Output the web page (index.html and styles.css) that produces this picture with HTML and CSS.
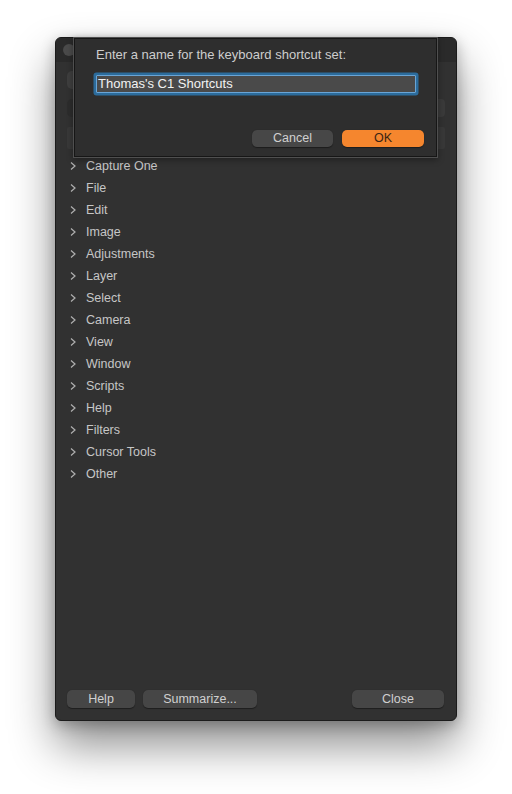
FILE: index.html
```html
<!DOCTYPE html>
<html>
<head>
<meta charset="utf-8">
<link rel="stylesheet" href="styles.css">
</head>
<body>
<div class="stage">
  <div class="window">
    <div class="titlebar">
      <span class="light"></span><span class="light"></span><span class="light"></span>
    </div>
    <div class="toolbar"><span class="popup"></span></div>
    <div class="searchrow"><span class="search"><span class="mag"></span></span><span class="gear"></span></div>
    <div class="header"></div>
    <ul class="tree">
      <li><svg class="chev" viewBox="0 0 8 10"><path d="M2 1.5 L6 5 L2 8.5"/></svg>Capture One</li>
      <li><svg class="chev" viewBox="0 0 8 10"><path d="M2 1.5 L6 5 L2 8.5"/></svg>File</li>
      <li><svg class="chev" viewBox="0 0 8 10"><path d="M2 1.5 L6 5 L2 8.5"/></svg>Edit</li>
      <li><svg class="chev" viewBox="0 0 8 10"><path d="M2 1.5 L6 5 L2 8.5"/></svg>Image</li>
      <li><svg class="chev" viewBox="0 0 8 10"><path d="M2 1.5 L6 5 L2 8.5"/></svg>Adjustments</li>
      <li><svg class="chev" viewBox="0 0 8 10"><path d="M2 1.5 L6 5 L2 8.5"/></svg>Layer</li>
      <li><svg class="chev" viewBox="0 0 8 10"><path d="M2 1.5 L6 5 L2 8.5"/></svg>Select</li>
      <li><svg class="chev" viewBox="0 0 8 10"><path d="M2 1.5 L6 5 L2 8.5"/></svg>Camera</li>
      <li><svg class="chev" viewBox="0 0 8 10"><path d="M2 1.5 L6 5 L2 8.5"/></svg>View</li>
      <li><svg class="chev" viewBox="0 0 8 10"><path d="M2 1.5 L6 5 L2 8.5"/></svg>Window</li>
      <li><svg class="chev" viewBox="0 0 8 10"><path d="M2 1.5 L6 5 L2 8.5"/></svg>Scripts</li>
      <li><svg class="chev" viewBox="0 0 8 10"><path d="M2 1.5 L6 5 L2 8.5"/></svg>Help</li>
      <li><svg class="chev" viewBox="0 0 8 10"><path d="M2 1.5 L6 5 L2 8.5"/></svg>Filters</li>
      <li><svg class="chev" viewBox="0 0 8 10"><path d="M2 1.5 L6 5 L2 8.5"/></svg>Cursor Tools</li>
      <li><svg class="chev" viewBox="0 0 8 10"><path d="M2 1.5 L6 5 L2 8.5"/></svg>Other</li>
    </ul>
    <div class="footer">
      <button class="btn help">Help</button>
      <button class="btn summarize">Summarize...</button>
      <span class="spacer"></span>
      <button class="btn close">Close</button>
    </div>

    <div class="sheet">
      <div class="prompt">Enter a name for the keyboard shortcut set:</div>
      <div class="field">Thomas's C1 Shortcuts</div>
      <div class="actions">
        <button class="btn cancel">Cancel</button>
        <button class="btn ok">OK</button>
      </div>
    </div>
  </div>
</div>
</body>
</html>
```
FILE: styles.css
```css
html, body {
  margin: 0;
  padding: 0;
  background: #ffffff;
  width: 512px;
  height: 794px;
  overflow: hidden;
  font-family: "Liberation Sans", Arial, sans-serif;
}

.stage {
  padding: 37px 0 0 55px;
}

.window {
  position: relative;
  box-sizing: border-box;
  width: 402px;
  height: 684px;
  background: #313131;
  border: 1px solid #1b1b1b;
  border-radius: 6px;
  box-shadow: 0 24px 45px rgba(0, 0, 0, 0.45), 0 4px 14px rgba(0, 0, 0, 0.25);
  display: flex;
  flex-direction: column;
}

.titlebar {
  height: 24px;
  background: #2a2a2a;
  border-radius: 5px 5px 0 0;
  display: flex;
  align-items: center;
  gap: 8px;
  padding-left: 7px;
}

.light {
  width: 12px;
  height: 12px;
  border-radius: 50%;
  background: #4a4a4a;
}

.toolbar {
  margin-top: 9px;
  padding-left: 11px;
  height: 18px;
  display: flex;
}

.popup {
  width: 90px;
  height: 18px;
  border-radius: 5px;
  background: #3e3e3e;
}

.searchrow {
  margin-top: 10px;
  height: 18px;
  padding: 0 11px;
  display: flex;
  gap: 6px;
}

.search {
  flex: 1;
  border-radius: 5px;
  background: #2c2c2c;
  display: flex;
  align-items: center;
  padding-left: 14px;
}

.mag {
  width: 3px;
  height: 5px;
  border-radius: 2px;
  background: #7a7a7a;
}

.gear {
  width: 12px;
  border-radius: 4px;
  background: #3a3a3a;
}

.header {
  margin: 10px 11px 0;
  height: 22px;
  background: #383838;
  border-radius: 2px;
}

.tree {
  list-style: none;
  margin: 6px 0 0;
  padding: 0 0 0 13px;
  flex: 1;
}

.tree li {
  height: 22px;
  display: flex;
  align-items: center;
  font-size: 12.5px;
  color: #c6c6c6;
}

.chev {
  width: 8px;
  height: 10px;
  margin-right: 9px;
  fill: none;
  stroke: #b0b0b0;
  stroke-width: 1.2;
}

.footer {
  display: flex;
  padding: 0 12px 12px 11px;
  gap: 8px;
}

.spacer {
  flex: 1;
}

.btn {
  font-family: "Liberation Sans", Arial, sans-serif;
  font-size: 12.5px;
  color: #d0d0d0;
  background: #464646;
  border: none;
  border-radius: 5px;
  height: 18px;
  padding: 0;
  line-height: 18px;
  box-shadow: 0 0.5px 1px rgba(0, 0, 0, 0.4);
}

.help { width: 68px; }
.summarize { width: 114px; }
.close { width: 92px; }

.sheet {
  position: absolute;
  left: 17px;
  top: -1px;
  box-sizing: border-box;
  width: 365px;
  height: 121px;
  background: #2e2e2e;
  border: 1px solid #4f4f4f;
  box-shadow: inset 0 0 0 1px #161616, 0 2px 6px rgba(0, 0, 0, 0.35);
  padding: 9px 13px 0 22px;
  display: flex;
  flex-direction: column;
}

.prompt {
  font-size: 13px;
  line-height: 16px;
  color: #cdcdcd;
}

.field {
  margin-top: 12px;
  width: 320px;
  height: 18px;
  box-sizing: border-box;
  background: #4a4a4a;
  border: 1px solid #6aa5d6;
  box-shadow: 0 0 0 2.5px #2c6c9c;
  border-radius: 1px;
  font-size: 13px;
  line-height: 16px;
  color: #f2f2f2;
  padding-left: 1px;
}

.actions {
  margin-top: 37px;
  display: flex;
  justify-content: flex-end;
  gap: 9px;
}

.cancel {
  width: 81px;
  height: 17px;
  line-height: 17px;
  background: #474747;
}

.ok {
  width: 82px;
  height: 17px;
  line-height: 17px;
  background: #f5862e;
  color: #3b2414;
}
```
